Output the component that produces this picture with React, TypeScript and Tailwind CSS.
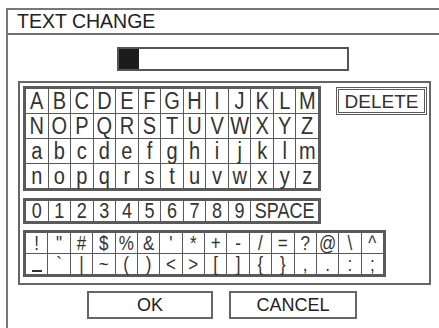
const letterRows = [
  ["A", "B", "C", "D", "E", "F", "G", "H", "I", "J", "K", "L", "M"],
  ["N", "O", "P", "Q", "R", "S", "T", "U", "V", "W", "X", "Y", "Z"],
  ["a", "b", "c", "d", "e", "f", "g", "h", "i", "j", "k", "l", "m"],
  ["n", "o", "p", "q", "r", "s", "t", "u", "v", "w", "x", "y", "z"],
];

const digits = ["0", "1", "2", "3", "4", "5", "6", "7", "8", "9"];

const symbolRows = [
  ["!", '"', "#", "$", "%", "&", "'", "*", "+", "-", "/", "=", "?", "@", "\\", "^"],
  ["_", "`", "|", "~", "(", ")", "<", ">", "[", "]", "{", "}", ",", ".", ":", ";"],
];

function Key({ label, small }: { label: string; small?: boolean }) {
  return (
    <div className="flex items-center justify-center bg-white">
      <span
        className={
          small
            ? "inline-block scale-y-[1.15] text-[17px] leading-none text-[#333]"
            : "inline-block scale-y-[1.15] text-[20px] leading-none text-[#333]"
        }
      >
        {label}
      </span>
    </div>
  );
}

export default function App() {
  return (
    <div
      className="h-[328px] w-[439px] overflow-hidden bg-white"
      style={{ fontFamily: '"Liberation Sans", Arial, sans-serif' }}
    >
      <div className="ml-[6px] mt-[8px] h-[330px] w-[440px] border-l-2 border-t-2 border-[#777]">
        {/* titel */}
        <div className="flex h-[25px] items-center border-b-2 border-[#6e6e6e] pl-[9px] text-[19.5px] leading-none text-[#222]">
          TEXT CHANGE
        </div>

        {/* vstupni pole */}
        <div className="ml-[109px] mt-[12px] flex h-[24px] w-[232px] border-2 border-[#555] bg-white">
          <div className="h-full w-[20px] bg-[#1c1c1c]" />
        </div>

        {/* klavesnice */}
        <div className="ml-[10px] mt-[10px] h-[204px] w-[413px] border-2 border-[#666] pl-[3px] pt-[3px]">
          <div className="flex items-start">
            <div className="grid h-[105px] w-[298px] grid-cols-13 grid-rows-4 gap-px border-[3px] border-double border-[#5a5a5a] bg-[#5a5a5a]">
              {letterRows.flat().map((k, i) => (
                <Key key={i} label={k} />
              ))}
            </div>
            <div className="ml-[15px] mt-px flex h-[28px] w-[91px] items-center justify-center border-[3px] border-double border-[#5a5a5a] text-[19px] leading-none text-[#333]">
              DELETE
            </div>
          </div>

          <div className="mt-[7px] grid h-[26px] w-[298px] grid-cols-13 gap-px border-[3px] border-double border-[#5a5a5a] bg-[#5a5a5a]">
            {digits.map((d) => (
              <div key={d} className="flex items-center justify-center bg-white">
                <span className="inline-block scale-y-[1.2] text-[18px] leading-none text-[#333]">
                  {d}
                </span>
              </div>
            ))}
            <div className="col-span-3 flex items-center justify-center bg-white">
              <span className="inline-block scale-y-[1.2] text-[18px] leading-none text-[#333]">
                SPACE
              </span>
            </div>
          </div>

          <div className="mt-[6px] grid h-[47px] w-[363px] grid-cols-16 grid-rows-2 gap-px border-[3px] border-double border-[#5a5a5a] bg-[#5a5a5a]">
            {symbolRows.flat().map((k, i) =>
              k === "_" ? (
                <div key={i} className="flex items-end justify-center bg-white pb-[2px]">
                  <span className="block h-[2px] w-[10px] bg-[#333]" />
                </div>
              ) : (
                <Key key={i} label={k} small />
              ),
            )}
          </div>
        </div>

        {/* tlacitka */}
        <div className="ml-[79px] mt-[6px] flex gap-[16px]">
          <button className="flex h-[28px] w-[126px] items-center justify-center border-2 border-[#666] bg-white text-[18px] leading-none text-[#222]">
            OK
          </button>
          <button className="flex h-[28px] w-[128px] items-center justify-center border-2 border-[#666] bg-white text-[18px] leading-none text-[#222]">
            CANCEL
          </button>
        </div>
      </div>
    </div>
  );
}
